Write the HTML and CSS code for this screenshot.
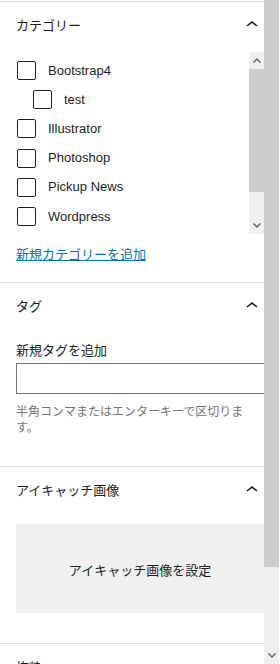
FILE: index.html
```html
<!DOCTYPE html>
<html lang="ja">
<head>
<meta charset="utf-8">
<title>Sidebar</title>
<link rel="stylesheet" href="styles.css">
</head>
<body>
<div class="sidebar">
  <section class="panel panel-first">
    <div class="panel-head">
      <h2 class="panel-title">カテゴリー</h2>
      <svg class="chev" viewBox="0 0 24 24" width="24" height="24"><path d="M6.5 12.4L12 8l5.5 4.4-.9 1.2L12 10l-4.6 3.6-1-1.2z"/></svg>
    </div>
    <div class="panel-body">
      <div class="terms">
        <ul class="term-list">
          <li class="term"><span class="box"></span><span class="term-label">Bootstrap4</span></li>
          <li class="term term-child"><span class="box"></span><span class="term-label">test</span></li>
          <li class="term"><span class="box"></span><span class="term-label">Illustrator</span></li>
          <li class="term"><span class="box"></span><span class="term-label">Photoshop</span></li>
          <li class="term"><span class="box"></span><span class="term-label">Pickup News</span></li>
          <li class="term"><span class="box"></span><span class="term-label">Wordpress</span></li>
        </ul>
        <div class="sb sb-inner">
          <div class="sb-btn"><svg viewBox="0 0 8 5" width="8" height="5"><path d="M0 4L4 0L8 4L7 5L4 2L1 5Z"/></svg></div>
          <div class="sb-thumb sb-inner-thumb"></div>
          <div class="sb-track"></div>
          <div class="sb-btn"><svg viewBox="0 0 8 5" width="8" height="5"><path d="M0 1L1 0L4 3L7 0L8 1L4 5Z"/></svg></div>
        </div>
      </div>
      <a class="add-link" href="#">新規カテゴリーを追加</a>
    </div>
  </section>

  <section class="panel">
    <div class="panel-head">
      <h2 class="panel-title">タグ</h2>
      <svg class="chev" viewBox="0 0 24 24" width="24" height="24"><path d="M6.5 12.4L12 8l5.5 4.4-.9 1.2L12 10l-4.6 3.6-1-1.2z"/></svg>
    </div>
    <div class="panel-body panel-body-tags">
      <label class="field-label" for="tag">新規タグを追加</label>
      <input class="tag-input" id="tag" type="text">
      <p class="help">半角コンマまたはエンターキーで区切ります。</p>
    </div>
  </section>

  <section class="panel">
    <div class="panel-head">
      <h2 class="panel-title">アイキャッチ画像</h2>
      <svg class="chev" viewBox="0 0 24 24" width="24" height="24"><path d="M6.5 12.4L12 8l5.5 4.4-.9 1.2L12 10l-4.6 3.6-1-1.2z"/></svg>
    </div>
    <div class="panel-body panel-body-image">
      <div class="image-btn">アイキャッチ画像を設定</div>
    </div>
  </section>

  <section class="panel">
    <div class="panel-head">
      <h2 class="panel-title">抜粋</h2>
    </div>
  </section>
</div>
<div class="sb sb-page">
  <div class="sb-thumb sb-page-thumb"></div>
  <div class="sb-track"></div>
  <div class="sb-btn"><svg viewBox="0 0 8 5" width="8" height="5"><path d="M0 1L1 0L4 3L7 0L8 1L4 5Z"/></svg></div>
</div>
</body>
</html>
```

FILE: styles.css
```css
html, body {
  margin: 0;
  padding: 0;
}
body {
  width: 280px;
  height: 664px;
  overflow: hidden;
  display: flex;
  background: #fff;
  font-family: "Liberation Sans", "Noto Sans CJK JP", sans-serif;
  font-size: 13px;
  color: #1e1e1e;
}
.sidebar {
  width: 264px;
  height: 664px;
  overflow: hidden;
  flex: none;
}
.panel {
  border-top: 1px solid #e0e0e0;
}
.panel-first {
  margin-top: 1px;
}
.panel-head {
  height: 48px;
  display: flex;
  align-items: center;
  justify-content: space-between;
  padding-left: 16px;
}
.panel-title {
  margin: 0;
  font-size: 13px;
  font-weight: 400;
  line-height: 20px;
}
.chev {
  flex: none;
  fill: #1e1e1e;
  margin-top: -2px;
}
.panel-body {
  padding: 0 0 17px 16px;
}
.terms {
  margin-top: 2px;
  height: 182px;
  display: flex;
  overflow: hidden;
}
.term-list {
  list-style: none;
  margin: 0;
  padding: 4px 0 0 1px;
  flex: 1;
  overflow: hidden;
}
.term {
  height: 29.2px;
  display: flex;
  align-items: center;
}
.term-child {
  padding-left: 16px;
}
.box {
  width: 17px;
  height: 17px;
  border: 1px solid #1e1e1e;
  border-radius: 2px;
  flex: none;
  margin-right: 12px;
}
.term-label {
  line-height: 18px;
}
.sb {
  width: 15px;
  flex: none;
  display: flex;
  flex-direction: column;
  background: #f0f0f0;
}
.sb-btn {
  height: 17px;
  display: flex;
  align-items: center;
  justify-content: center;
  flex: none;
}
.sb-btn svg {
  fill: #606060;
}
.sb-thumb {
  background: #cdcdcd;
  flex: none;
}
.sb-track {
  flex: 1;
}
.sb-inner-thumb {
  height: 123px;
}
.add-link {
  display: inline-block;
  margin-top: 11px;
  line-height: 20px;
  color: #0073aa;
  text-decoration: underline;
}
.panel-body-tags {
  padding-top: 11px;
  padding-bottom: 30px;
}
.field-label {
  display: block;
  line-height: 18px;
}
.tag-input {
  display: block;
  box-sizing: border-box;
  margin: 3px 0 0 0;
  width: 262px;
  height: 31px;
  border: 1px solid #757575;
  border-radius: 0;
  padding: 0 8px;
  font: inherit;
  background: #fff;
}
.help {
  margin: 10px 0 0 0;
  width: 236px;
  font-size: 12px;
  line-height: 16px;
  color: #757575;
}
.panel-body-image {
  padding-top: 9px;
  padding-bottom: 30px;
}
.image-btn {
  height: 89px;
  display: flex;
  align-items: center;
  justify-content: center;
  background: #f0f0f0;
  padding-top: 2px;
  box-sizing: border-box;
}
.sb-page {
  height: 664px;
  margin-right: 1px;
}
.sb-page-thumb {
  height: 567px;
}
```
